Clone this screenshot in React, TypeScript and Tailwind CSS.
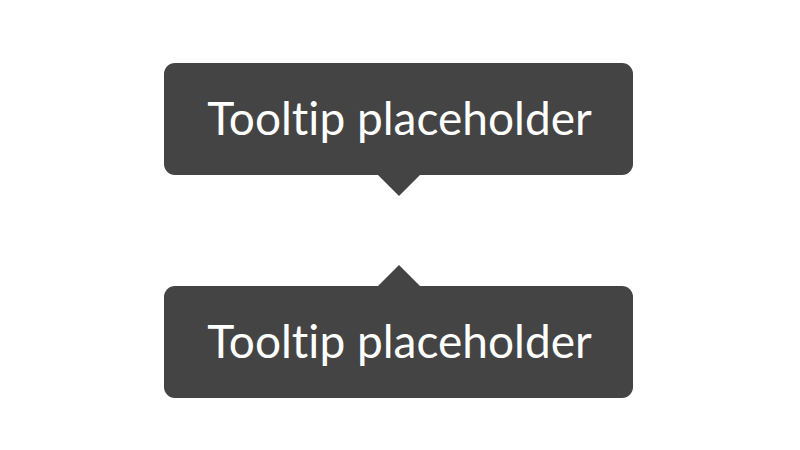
export default function App() {
  const text = "Tooltip placeholder";
  return (
    <div className="w-[800px] h-[450px] bg-white flex flex-col items-center pt-[63px] pr-[3px]" style={{ fontFamily: "Lato, 'Noto Sans', sans-serif", fontVariantLigatures: "none" }}>
      <div className="flex flex-col items-center">
        <div className="w-[469px] h-[112px] rounded-[11px] bg-[#444444] flex items-center justify-center text-white text-[46px] leading-none pb-[2px] pl-[2px]">
          {text}
        </div>
        <div className="w-0 h-0 border-l-[21px] border-r-[21px] border-t-[21px] border-l-transparent border-r-transparent border-t-[#444444]" />
      </div>
      <div className="flex flex-col items-center mt-[69px]">
        <div className="w-0 h-0 border-l-[21px] border-r-[21px] border-b-[21px] border-l-transparent border-r-transparent border-b-[#444444]" />
        <div className="w-[469px] h-[112px] rounded-[11px] bg-[#444444] flex items-center justify-center text-white text-[46px] leading-none pb-[2px] pl-[2px]">
          {text}
        </div>
      </div>
    </div>
  );
}
